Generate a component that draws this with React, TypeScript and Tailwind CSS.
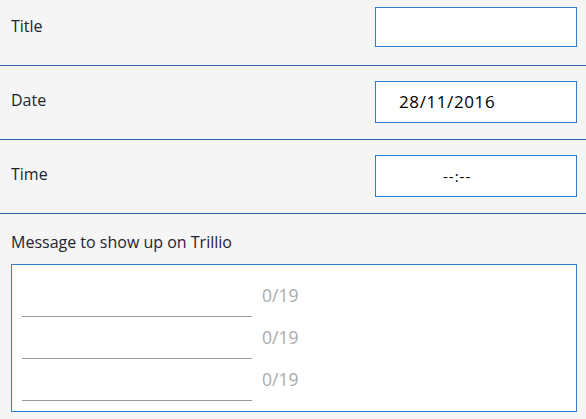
export default function App() {
  const font = { fontFamily: '"Open Sans", "Noto Sans", sans-serif' };
  return (
    <div className="w-[586px] h-[419px] overflow-hidden bg-[#f5f5f5] text-[#22252f]" style={font}>
      <div className="h-[66px] flex items-start justify-between pl-[11px] pr-[9px] pt-[7px] border-b border-[#2a62a8]">
        <span className="text-[16px] leading-[38px]">Title</span>
        <div className="w-[202px] h-[40px] bg-white border border-[#2f7fcf]" />
      </div>
      <div className="h-[74px] flex items-start justify-between pl-[11px] pr-[9px] pt-[15px] border-b border-[#2a62a8]">
        <span className="text-[16px] leading-[38px]">Date</span>
        <div className="w-[202px] h-[42px] bg-white border border-[#2f7fcf] flex items-center pl-[23px] text-[17px] text-black tracking-[0.6px]">
          28/11/2016
        </div>
      </div>
      <div className="h-[74px] flex items-start justify-between pl-[11px] pr-[9px] pt-[15px] border-b border-[#2a62a8]">
        <span className="text-[16px] leading-[38px]">Time</span>
        <div className="w-[202px] h-[42px] bg-white border border-[#2f7fcf] flex items-center pl-[67px] text-[15px] text-black tracking-[1px]">
          --:--
        </div>
      </div>
      <div className="pl-[11px] pr-[9px] pt-[18px]">
        <div className="text-[16px] leading-[20px]">Message to show up on Trillio</div>
        <div className="mt-[12px] h-[148px] bg-white border border-[#2f7fcf] pl-[10px] pt-[10px] flex flex-col">
          {[0, 1, 2].map((i) => (
            <div key={i} className="flex items-end h-[42px]">
              <div className="w-[230px] h-[42px] border-b border-[#9a9a9a]" />
              <span className="ml-[10px] mb-[10px] text-[17.5px] leading-[24px] text-[#ababab]">0/19</span>
            </div>
          ))}
        </div>
      </div>
    </div>
  );
}
